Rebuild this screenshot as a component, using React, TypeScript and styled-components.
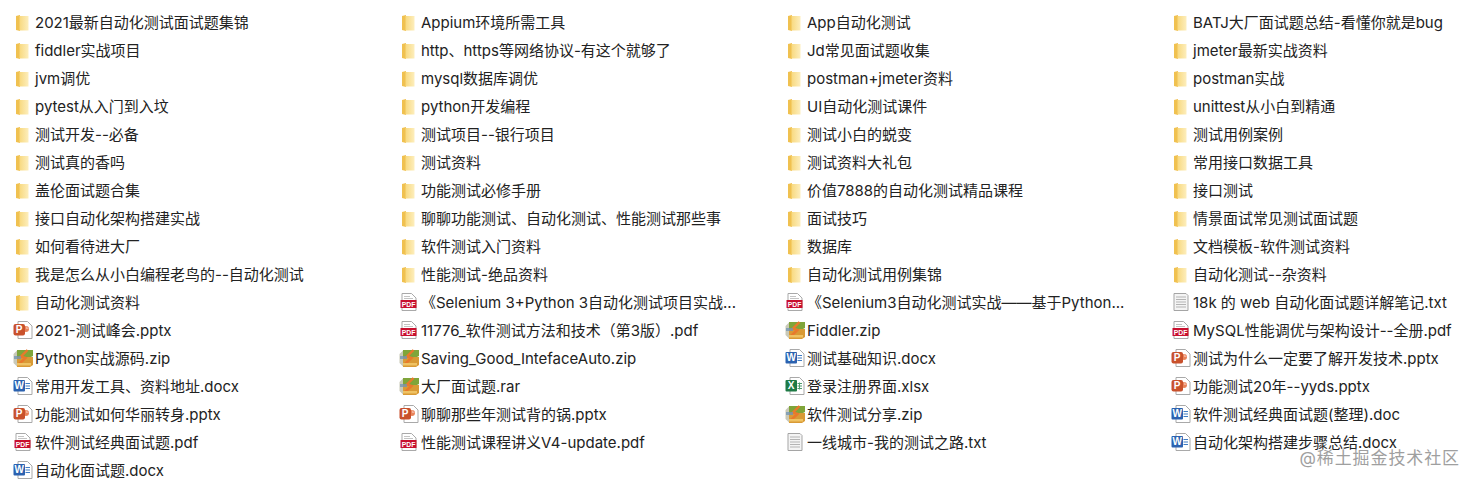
import React from "react";
import styled, { createGlobalStyle } from "styled-components";

type Kind = "folder" | "pdf" | "ppt" | "word" | "excel" | "zip" | "txt";
type Entry = [Kind, string];

const GlobalStyle = createGlobalStyle`
  html, body {
    margin: 0;
    padding: 0;
    background: #fff;
  }
`;

const f = (name: string): Entry => ["folder", name];

const columns: Entry[][] = [
  [
    f("2021最新自动化测试面试题集锦"),
    f("fiddler实战项目"),
    f("jvm调优"),
    f("pytest从入门到入坟"),
    f("测试开发--必备"),
    f("测试真的香吗"),
    f("盖伦面试题合集"),
    f("接口自动化架构搭建实战"),
    f("如何看待进大厂"),
    f("我是怎么从小白编程老鸟的--自动化测试"),
    f("自动化测试资料"),
    ["ppt", "2021-测试峰会.pptx"],
    ["zip", "Python实战源码.zip"],
    ["word", "常用开发工具、资料地址.docx"],
    ["ppt", "功能测试如何华丽转身.pptx"],
    ["pdf", "软件测试经典面试题.pdf"],
    ["word", "自动化面试题.docx"],
  ],
  [
    f("Appium环境所需工具"),
    f("http、https等网络协议-有这个就够了"),
    f("mysql数据库调优"),
    f("python开发编程"),
    f("测试项目--银行项目"),
    f("测试资料"),
    f("功能测试必修手册"),
    f("聊聊功能测试、自动化测试、性能测试那些事"),
    f("软件测试入门资料"),
    f("性能测试-绝品资料"),
    ["pdf", "《Selenium 3+Python 3自动化测试项目实战..."],
    ["pdf", "11776_软件测试方法和技术（第3版）.pdf"],
    ["zip", "Saving_Good_IntefaceAuto.zip"],
    ["zip", "大厂面试题.rar"],
    ["ppt", "聊聊那些年测试背的锅.pptx"],
    ["pdf", "性能测试课程讲义V4-update.pdf"],
  ],
  [
    f("App自动化测试"),
    f("Jd常见面试题收集"),
    f("postman+jmeter资料"),
    f("UI自动化测试课件"),
    f("测试小白的蜕变"),
    f("测试资料大礼包"),
    f("价值7888的自动化测试精品课程"),
    f("面试技巧"),
    f("数据库"),
    f("自动化测试用例集锦"),
    ["pdf", "《Selenium3自动化测试实战——基于Python..."],
    ["zip", "Fiddler.zip"],
    ["word", "测试基础知识.docx"],
    ["excel", "登录注册界面.xlsx"],
    ["zip", "软件测试分享.zip"],
    ["txt", "一线城市-我的测试之路.txt"],
  ],
  [
    f("BATJ大厂面试题总结-看懂你就是bug"),
    f("jmeter最新实战资料"),
    f("postman实战"),
    f("unittest从小白到精通"),
    f("测试用例案例"),
    f("常用接口数据工具"),
    f("接口测试"),
    f("情景面试常见测试面试题"),
    f("文档模板-软件测试资料"),
    f("自动化测试--杂资料"),
    ["txt", "18k 的 web 自动化面试题详解笔记.txt"],
    ["pdf", "MySQL性能调优与架构设计--全册.pdf"],
    ["ppt", "测试为什么一定要了解开发技术.pptx"],
    ["ppt", "功能测试20年--yyds.pptx"],
    ["word", "软件测试经典面试题(整理).doc"],
    ["word", "自动化架构搭建步骤总结.docx"],
  ],
];

const Page = styled.div`
  position: relative;
  width: 1476px;
  height: 484px;
  box-sizing: border-box;
  padding: 8px 0 0 12px;
  display: grid;
  grid-template-columns: repeat(4, 386px);
  overflow: hidden;
  background: #fff;
  font-family: Inter, "Noto Sans CJK SC", sans-serif;
`;

const Column = styled.ul`
  list-style: none;
  margin: 0;
  padding: 0;
`;

const Row = styled.li`
  display: flex;
  align-items: center;
  height: 28px;
  gap: 2px;
`;

const IconSlot = styled.span`
  flex: none;
  width: 21px;
  height: 20px;
  display: flex;
  align-items: center;
  justify-content: center;
`;

const Name = styled.span`
  font-size: 15px;
  line-height: 28px;
  padding-top: 2px;
  color: #222;
  white-space: nowrap;
`;

const Watermark = styled.div`
  position: absolute;
  right: 16px;
  bottom: 15px;
  font-size: 17px;
  line-height: 22px;
  color: #9f9f9f;
  letter-spacing: 0.9px;
  text-shadow: 0 0 2px rgba(255, 255, 255, 0.9);
`;

const FolderIcon = () => (
  <svg width="20" height="20" viewBox="0 0 20 20">
    <defs>
      <linearGradient id="folderBody" x1="0" x2="1" y1="0" y2="0">
        <stop offset="0" stopColor="#f8d97f" />
        <stop offset="1" stopColor="#fdeebd" />
      </linearGradient>
    </defs>
    <path d="M3 4 L7 3 V19 L3 18 Z" fill="#f0c150" />
    <path d="M6.5 4 H15.5 V18.5 H6.5 Z" fill="url(#folderBody)" />
  </svg>
);

const PageSheet = ({ x = 5 }: { x?: number }) => (
  <path
    d={`M${x} 1.5 H${x + 9.5} L${x + 14} 6 V18.5 H${x} Z`}
    fill="#fff"
    stroke="#a9a9a9"
    strokeWidth="1"
  />
);

const PdfIcon = () => (
  <svg width="20" height="20" viewBox="0 0 20 20">
    <PageSheet x={3} />
    <path d="M5 4.5 H11 M5 6.5 H14" stroke="#c4c4c4" strokeWidth="1" />
    <rect x="1.5" y="8" width="16" height="8" fill="#c8102e" />
    <text x="9.5" y="14.6" textAnchor="middle" fontSize="6.8" fontWeight="700" fill="#fff" fontFamily="Liberation Sans">
      PDF
    </text>
  </svg>
);

const PptIcon = () => (
  <svg width="20" height="20" viewBox="0 0 20 20">
    <PageSheet x={5} />
    <circle cx="13" cy="9" r="3" fill="#e8835a" />
    <path d="M13 6 V9 H16" fill="#f3b199" />
    <rect x="0.5" y="4" width="11.5" height="11.5" rx="2" fill="#c9512c" />
    <text x="6.2" y="13.4" textAnchor="middle" fontSize="10" fontWeight="700" fill="#fff" fontFamily="Liberation Sans">
      P
    </text>
  </svg>
);

const WordIcon = () => (
  <svg width="20" height="20" viewBox="0 0 20 20">
    <PageSheet x={5} />
    <path d="M12.5 7.5 H17 M12.5 10 H17 M12.5 12.5 H17" stroke="#3f7cc4" strokeWidth="1.1" />
    <rect x="0.5" y="4" width="11.5" height="11.5" rx="1" fill="#2b62b0" />
    <text x="6.2" y="13.4" textAnchor="middle" fontSize="10" fontWeight="700" fill="#fff" fontFamily="Liberation Sans">
      W
    </text>
  </svg>
);

const ExcelIcon = () => (
  <svg width="20" height="20" viewBox="0 0 20 20">
    <PageSheet x={5} />
    <path d="M12.5 7.5 H17 M12.5 10 H17 M12.5 12.5 H17" stroke="#4f9c6c" strokeWidth="1.1" />
    <path d="M14.5 6.5 V13.5" stroke="#4f9c6c" strokeWidth="1" />
    <rect x="0.5" y="4" width="11.5" height="11.5" rx="1" fill="#1e7a45" />
    <text x="6.2" y="13.4" textAnchor="middle" fontSize="10" fontWeight="700" fill="#fff" fontFamily="Liberation Sans">
      X
    </text>
  </svg>
);

const ZipIcon = () => (
  <svg width="20" height="20" viewBox="0 0 20 20">
    <path d="M0.5 6 L4 2.5 H7 V16 L4 18.5 L0.5 15 Z" fill="#c9c9b8" />
    <path d="M4 2 H20 V8 L16 10 H4 Z" fill="#7fa53a" />
    <path d="M4 9 H20 V17 L17 19 H4 Z" fill="#d99a35" />
    <path d="M14.5 2 L8 8.5 L12.5 10 L5.5 16.5" fill="none" stroke="#e9792c" strokeWidth="2.4" />
    <path d="M1 8 H8 V11 H1 Z" fill="#6f93b5" opacity="0.75" />
    <path d="M4 15 H18 V17.5 H4 Z" fill="#efc263" />
  </svg>
);

const TxtIcon = () => (
  <svg width="20" height="20" viewBox="0 0 20 20">
    <path d="M3 1.5 H15 L17 3.5 V18.5 H3 Z" fill="#f4f4f4" stroke="#a5a5a5" strokeWidth="1" />
    <path d="M5 5 H15 M5 7.5 H15 M5 10 H15 M5 12.5 H15 M5 15 H15" stroke="#b4b4b4" strokeWidth="1" />
  </svg>
);

const icons: Record<Kind, React.FC> = {
  folder: FolderIcon,
  pdf: PdfIcon,
  ppt: PptIcon,
  word: WordIcon,
  excel: ExcelIcon,
  zip: ZipIcon,
  txt: TxtIcon,
};

export default function App() {
  return (
    <>
      <GlobalStyle />
      <Page>
        {columns.map((entries, i) => (
          <Column key={i}>
            {entries.map(([kind, name]) => {
              const Icon = icons[kind];
              return (
                <Row key={name}>
                  <IconSlot>
                    <Icon />
                  </IconSlot>
                  <Name>{name}</Name>
                </Row>
              );
            })}
          </Column>
        ))}
        <Watermark>@稀土掘金技术社区</Watermark>
      </Page>
    </>
  );
}
